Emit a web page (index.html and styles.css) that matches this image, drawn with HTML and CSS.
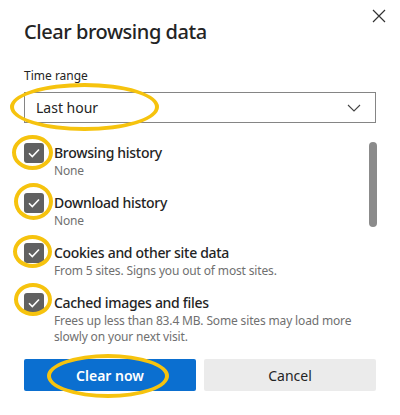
FILE: index.html
```html
<!DOCTYPE html>
<html>
<head>
  <meta charset="UTF-8">
  <meta name="viewport" content="width=device-width, initial-scale=1.0">
  <title>Clear browsing data</title>
  <link rel="stylesheet" href="styles.css">
</head>
<body>
<div class="dialog">
  <div class="header">
    <h1 class="title">Clear browsing data</h1>
    <button class="close" aria-label="Close">
      <svg width="14" height="14" viewBox="0 0 14 14"><path d="M1 1L13 13M13 1L1 13" stroke="#333" stroke-width="1.2" fill="none"/></svg>
    </button>
  </div>

  <p class="field-label">Time range</p>
  <div class="select">
    <span>Last hour</span>
    <svg width="14" height="8" viewBox="0 0 14 8"><path d="M1 1L7 7L13 1" stroke="#444" stroke-width="1.1" fill="none"/></svg>
  </div>

  <div class="list">
    <div class="items">
      <div class="item">
        <span class="check"><svg width="12" height="10" viewBox="0 0 12 10"><path d="M1 5.2L4.3 8.5L11 1.5" stroke="#fff" stroke-width="1.6" fill="none"/></svg></span>
        <div class="text">
          <div class="name">Browsing history</div>
          <div class="desc">None</div>
        </div>
      </div>
      <div class="item">
        <span class="check"><svg width="12" height="10" viewBox="0 0 12 10"><path d="M1 5.2L4.3 8.5L11 1.5" stroke="#fff" stroke-width="1.6" fill="none"/></svg></span>
        <div class="text">
          <div class="name">Download history</div>
          <div class="desc">None</div>
        </div>
      </div>
      <div class="item">
        <span class="check"><svg width="12" height="10" viewBox="0 0 12 10"><path d="M1 5.2L4.3 8.5L11 1.5" stroke="#fff" stroke-width="1.6" fill="none"/></svg></span>
        <div class="text">
          <div class="name">Cookies and other site data</div>
          <div class="desc">From 5 sites. Signs you out of most sites.</div>
        </div>
      </div>
      <div class="item">
        <span class="check"><svg width="12" height="10" viewBox="0 0 12 10"><path d="M1 5.2L4.3 8.5L11 1.5" stroke="#fff" stroke-width="1.6" fill="none"/></svg></span>
        <div class="text">
          <div class="name">Cached images and files</div>
          <div class="desc">Frees up less than 83.4 MB. Some sites may load more slowly on your next visit.</div>
        </div>
      </div>
    </div>
    <div class="scrollbar"><div class="thumb"></div></div>
  </div>

  <div class="buttons">
    <button class="btn primary">Clear now</button>
    <button class="btn">Cancel</button>
  </div>
</div>

<!-- yellow annotation marks -->
<div class="mark m-select"></div>
<div class="mark m-c1"></div>
<div class="mark m-c2"></div>
<div class="mark m-c3"></div>
<div class="mark m-c4"></div>
<div class="mark m-clear"></div>
</body>
</html>
```

FILE: styles.css
```css
body {
  margin: 0;
  background: #fff;
  font-family: "Noto Sans", "Open Sans", sans-serif;
  color: #1f1f1f;
}
.dialog {
  width: 400px;
  height: 415px;
  box-sizing: border-box;
  padding: 4px 24px 0 24px;
}
.header {
  display: flex;
  justify-content: space-between;
  align-items: flex-start;
}
.title {
  margin: 14px 0 0 0;
  font-size: 20px;
  line-height: 28px;
  font-weight: 500;
  color: #242424;
  letter-spacing: -0.45px;
}
.close {
  width: 24px;
  height: 24px;
  margin-right: -15px;
  padding: 0;
  border: none;
  background: none;
  display: flex;
  align-items: center;
  justify-content: center;
}
.field-label {
  margin: 22px 0 0 0;
  font-size: 12px;
  line-height: 16px;
  color: #242424;
}
.select {
  margin-top: 8px;
  height: 31px;
  box-sizing: border-box;
  border: 1px solid #858585;
  display: flex;
  align-items: center;
  justify-content: space-between;
  padding: 0 14px 0 11px;
  font-size: 14px;
  color: #242424;
}
.list {
  display: flex;
  margin-top: 19px;
  height: 203px;
}
.items {
  flex: 1;
  display: flex;
  flex-direction: column;
  gap: 14px;
  padding-top: 1px;
}
.item {
  display: flex;
  gap: 10px;
}
.check {
  width: 20px;
  height: 20px;
  border-radius: 3px;
  background: #616161;
  flex: none;
  display: flex;
  align-items: center;
  justify-content: center;
}
.text {
  flex: 1;
  padding-right: 4px;
}
.name {
  font-size: 14px;
  line-height: 20px;
  font-weight: 500;
  color: #242424;
  letter-spacing: -0.3px;
}
.desc {
  font-size: 12px;
  line-height: 16px;
  color: #707070;
  letter-spacing: -0.15px;
}
.scrollbar {
  width: 8px;
  margin-right: -1px;
}
.thumb {
  height: 85px;
  background: #8b8b8b;
  border-radius: 4px;
}
.buttons {
  display: flex;
  gap: 8px;
  margin-top: 14px;
}
.btn {
  flex: 1;
  height: 32px;
  border: none;
  border-radius: 2px;
  background: #ebebeb;
  font-family: "Noto Sans", "Open Sans", sans-serif;
  font-size: 14px;
  font-weight: 400;
  color: #242424;
}
.btn.primary {
  background: #0b6fd0;
  color: #fff;
  font-weight: 600;
}
.mark {
  position: absolute;
  box-sizing: border-box;
  border: 4px solid #f6c30e;
  border-radius: 50%;
}
.m-select { left: 10px; top: 83px; width: 149px; height: 48px; }
.m-c1 { left: 12px; top: 135px; width: 41px; height: 35px; }
.m-c2 { left: 14px; top: 183px; width: 39px; height: 37px; }
.m-c3 { left: 13px; top: 235px; width: 39px; height: 33px; }
.m-c4 { left: 14px; top: 283px; width: 38px; height: 33px; }
.m-clear { left: 47px; top: 354px; width: 122px; height: 44px; }
```
